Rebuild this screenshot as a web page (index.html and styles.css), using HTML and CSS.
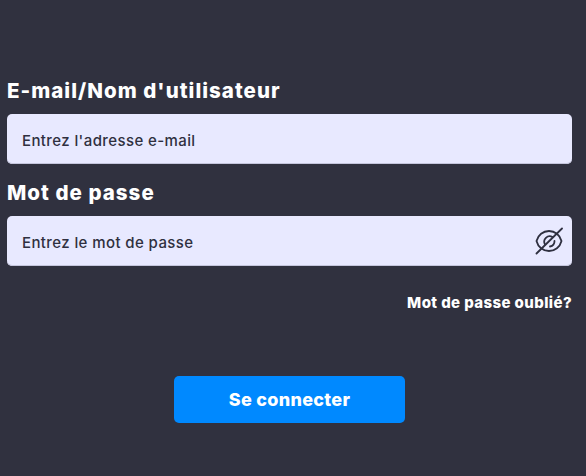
FILE: index.html
```html
<!DOCTYPE html>
<html lang="fr">
<head>
<meta charset="utf-8">
<title>Connexion</title>
<link rel="stylesheet" href="styles.css">
</head>
<body>
<form class="form">
  <label class="label label-first" for="email">E-mail/Nom d'utilisateur</label>
  <div class="field">
    <input class="input" id="email" type="text" placeholder="Entrez l'adresse e-mail">
  </div>
  <label class="label label-second" for="password">Mot de passe</label>
  <div class="field">
    <input class="input" id="password" type="password" placeholder="Entrez le mot de passe">
    <svg class="eye" viewBox="0 0 28 28" width="28" height="28" fill="none" stroke="#2f3040" stroke-width="1.8" stroke-linecap="round" stroke-linejoin="round" aria-hidden="true">
      <path d="M1.500 14C3 8 8 4 14 4s11 4 12.500 10C25 20 20 24 14 24S3 20 1.500 14Z"/>
      <path d="M10 17.500A5.500 5.500 0 0 1 17.500 10"/>
      <path d="M19.500 14A5.500 5.500 0 0 1 15 19.500"/>
      <path d="M1.500 26.500L27 1.500"/>
    </svg>
  </div>
  <div class="forgot-row"><a class="forgot" href="#">Mot de passe oublié?</a></div>
  <div class="submit-row"><button class="submit" type="button">Se connecter</button></div>
</form>
</body>
</html>
```
FILE: styles.css
```css
html, body { margin: 0; padding: 0; }
body {
  width: 586px;
  height: 476px;
  overflow: hidden;
  background: #30313f;
  font-family: Inter, "Open Sans", sans-serif;
}
.form {
  display: flex;
  flex-direction: column;
  width: 565px;
  margin-left: 7px;
  padding-top: 79px;
}
.label {
  display: block;
  height: 24px;
  line-height: 24px;
  font-size: 20.500px;
  font-weight: 800;
  color: #fff;
  letter-spacing: 1.030px;
}
.label-first { margin-bottom: 11px; }
.label-second { margin-top: 17px; margin-bottom: 11px; }
.field {
  display: flex;
  align-items: center;
  height: 50px;
  background: #e8e9ff;
  border-radius: 5px;
  box-shadow: inset 0 -1px 0 #c4c5dc;
  padding: 0 9px 0 15px;
  box-sizing: border-box;
}
.input {
  flex: 1;
  min-width: 0;
  border: 0;
  padding: 2px 0 0;
  background: transparent;
  outline: none;
  font-family: inherit;
  font-size: 15px;
  font-weight: 500;
  color: #2f3040;
  letter-spacing: 0.400px;
}
.input::placeholder { color: #2f3040; opacity: 1; }
.eye { flex: none; }
.forgot-row {
  display: flex;
  justify-content: flex-end;
  margin-top: 27px;
}
.forgot {
  color: #fff;
  font-size: 15px;
  font-weight: 800;
  line-height: 20px;
  text-decoration: none;
  letter-spacing: 0.400px;
}
.submit-row {
  display: flex;
  justify-content: center;
  margin-top: 63px;
}
.submit {
  width: 231px;
  height: 47px;
  border: 0;
  border-radius: 5px;
  background: #0089ff;
  color: #fff;
  font-family: inherit;
  font-size: 18px;
  font-weight: 800;
  letter-spacing: 0.300px;
}
```
